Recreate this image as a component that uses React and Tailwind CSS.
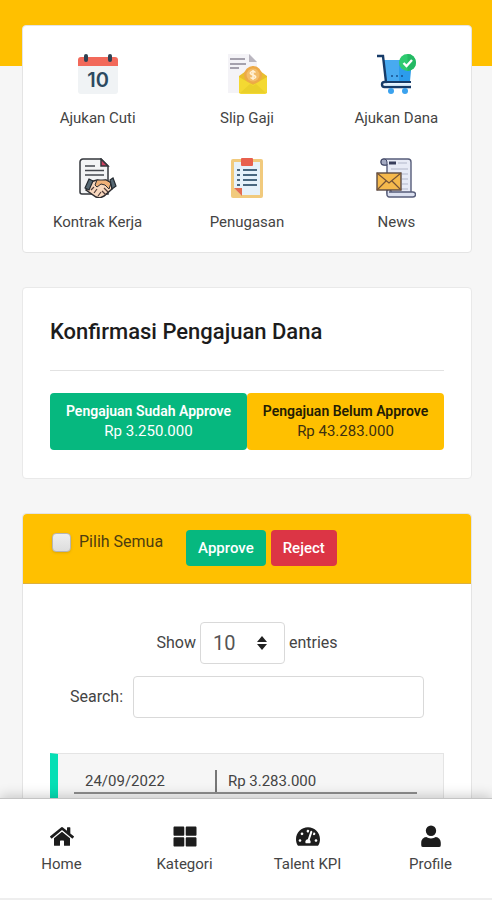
import React, { useState } from 'react';
import { FaHome, FaThLarge, FaTachometerAlt } from 'react-icons/fa';

const CalendarIcon = () => (
  <svg viewBox="0 0 40 40" className="w-10 h-10" aria-hidden="true">
    <path d="M0 10h40v27a3 3 0 0 1-3 3H3a3 3 0 0 1-3-3z" fill="#f0f3f5" />
    <path d="M3 3h34a3 3 0 0 1 3 3v6H0V6a3 3 0 0 1 3-3z" fill="#f2695a" />
    <rect x="6" y="0" width="4" height="8" rx="2" fill="#2f4152" />
    <rect x="30" y="0" width="4" height="8" rx="2" fill="#2f4152" />
    <text
      x="20"
      y="33"
      textAnchor="middle"
      fontFamily="Inter, sans-serif"
      fontWeight="600"
      fontSize="20"
      fill="#2c4a60"
    >
      10
    </text>
  </svg>
);

const PayslipIcon = () => (
  <svg viewBox="0 0 40 40" className="w-10 h-10" aria-hidden="true">
    <path d="M1 0h22l7 8v31H1z" fill="#f4f3f7" />
    <path d="M22 0l8 8h-8z" fill="#b9b6bf" />
    <g stroke="#837d8d" strokeWidth="1.4">
      <path d="M3 5h15" />
      <path d="M3 10h16" />
      <path d="M3 14h9" />
    </g>
    <path d="M12 22l14-10 14 10v17H12z" fill="#e9bf2d" />
    <circle cx="26" cy="21" r="9" fill="#edaa48" />
    <circle cx="26" cy="21" r="6.5" fill="#f3bd69" />
    <path
      d="M28.5 18.5q-2.5-2-4.5-.5t2 3 2 3-4.5-.5M26 16v10"
      fill="none"
      stroke="#fff1d5"
      strokeWidth="1.5"
    />
    <path d="M12 23l14 8 14-8v15a2 2 0 0 1-2 2H14a2 2 0 0 1-2-2z" fill="#f4d932" />
    <path d="M13 39l10-9 3 2 3-2 10 9z" fill="#ead02b" />
  </svg>
);

const CartIcon = () => (
  <svg viewBox="0 0 40 40" className="w-10 h-10" aria-hidden="true">
    <path d="M8 6h28l-2 21H10z" fill="#2c9cec" />
    <path d="M8 6h15v21H10z" fill="#48aaf0" />
    <path
      d="M1 2h6l3 26H8.5a2.5 2.5 0 0 0 0 5H35"
      fill="none"
      stroke="#163b68"
      strokeWidth="2.4"
    />
    <path d="M9 28h26" stroke="#163b68" strokeWidth="2" />
    <path d="M9 30.5h25" stroke="#d8efff" strokeWidth="2" />
    <g fill="#174f8c">
      <circle cx="16" cy="22" r="1" />
      <circle cx="21" cy="22" r="1" />
      <circle cx="26" cy="22" r="1" />
    </g>
    <circle cx="15" cy="37" r="3" fill="#3ba2ee" />
    <circle cx="29" cy="37" r="3" fill="#3ba2ee" />
    <circle cx="31.5" cy="8.5" r="8.5" fill="#2ecb70" />
    <path d="M31.5 0a8.5 8.5 0 0 1 0 17z" fill="#24b963" />
    <path d="M27.5 9l3 3 5.5-6" fill="none" stroke="#fff" strokeWidth="2.4" />
  </svg>
);

const ContractIcon = () => (
  <svg viewBox="0 0 40 40" className="w-10 h-10" aria-hidden="true">
    <path
      d="M5 1h18l7 7v28H4a2 2 0 0 1-2-2V4a3 3 0 0 1 3-3z"
      fill="#f3f4f5"
      stroke="#34373c"
      strokeWidth="1.5"
    />
    <path d="M23 1v7h7z" fill="#cf4160" stroke="#34373c" strokeWidth="1.5" />
    <g stroke="#45484e" strokeWidth="1.5">
      <path d="M7 8h10" />
      <path d="M7 12.5h19" />
      <path d="M7 17h19" />
    </g>
    <path
      d="M12 24l7-2 4 1 5-1 5 3 1 6-8 7-4 2-4-1-10-7z"
      fill="#f8d7bd"
      stroke="#2d2c30"
      strokeWidth="1.5"
    />
    <path d="M19 22l9 0 5 3-2 6-4-4-4-1-4 3-2-2z" fill="#efb078" stroke="#2d2c30" />
    <path
      d="M13 32l3-3M16 35l3-4M20 38l3-4M24 33l4 4M26 30l4 4"
      stroke="#4f3b38"
      strokeWidth="1.2"
    />
    <path d="M11 21l4 2-4 9-4-2z" fill="#566873" stroke="#242a30" strokeWidth="1.2" />
    <path d="M32 22l3-2 3 8-4 3z" fill="#566873" stroke="#242a30" strokeWidth="1.2" />
  </svg>
);

const ClipboardIcon = () => (
  <svg viewBox="0 0 40 40" className="w-10 h-10" aria-hidden="true">
    <rect x="4" y="1" width="32" height="39" rx="2" fill="#f1ca7d" />
    <path d="M7 4h26v33H14l-7-7z" fill="#e6f1fa" />
    <path d="M7 30h8v8z" fill="#e36b50" />
    <rect x="14" y="0" width="12" height="8" rx="1" fill="#e8604e" />
    <g stroke="#49677f" strokeWidth="2">
      <path d="M16 12h14M16 17h14M16 22h14M16 27h14" />
      <path d="M10 12h3M10 17h3M10 22h3M10 27h3" />
    </g>
  </svg>
);

const NewsIcon = () => (
  <svg viewBox="0 0 40 40" className="w-10 h-10" aria-hidden="true">
    <path
      d="M8 1h24a3 3 0 0 1 3 3v31H11V7H8a3 3 0 0 1 0-6z"
      fill="#e8ebf6"
      stroke="#565c79"
      strokeWidth="1.4"
    />
    <path d="M8 1a3 3 0 0 1 3 3v3H8a3 3 0 0 1 0-6z" fill="#a4aac2" stroke="#454b69" />
    <path d="M13 5h7" stroke="#383e5c" strokeWidth="3" />
    <path d="M22 5h9M15 11h17M26 16h6M26 21h6M26 26h6M15 31h17" stroke="#b2b8ca" strokeWidth="1.2" />
    <path
      d="M13 34h24a2.5 2.5 0 0 1 0 5H13a2.5 2.5 0 0 1-2-3v-3a2 2 0 0 1 4 1z"
      fill="#dce1f0"
      stroke="#565c79"
      strokeWidth="1.4"
    />
    <rect x="1" y="15" width="24" height="17" fill="#f6b94c" stroke="#5c4b45" strokeWidth="1.4" />
    <path d="M1 15l12 10 12-10M1 32l9-9M25 32l-9-9" fill="none" stroke="#765336" strokeWidth="1.2" />
  </svg>
);

const ProfileIcon = ({ className }) => (
  <svg viewBox="0 0 24 24" className={className} fill="currentColor" aria-hidden="true">
    <circle cx="12" cy="6" r="5.4" />
    <path d="M7 12.6c1.4 1 3 1.4 5 1.4s3.6-.4 5-1.4c3 .3 5.2 2.8 5.2 6v2.4a2 2 0 0 1-2 2H3.8a2 2 0 0 1-2-2v-2.4c0-3.2 2.200-5.7 5.2-6z" />
  </svg>
);

const menus = [
  { label: 'Ajukan Cuti', icon: CalendarIcon },
  { label: 'Slip Gaji', icon: PayslipIcon },
  { label: 'Ajukan Dana', icon: CartIcon },
  { label: 'Kontrak Kerja', icon: ContractIcon },
  { label: 'Penugasan', icon: ClipboardIcon },
  { label: 'News', icon: NewsIcon }
];

const navItems = [
  { label: 'Home', icon: FaHome },
  { label: 'Kategori', icon: FaThLarge },
  { label: 'Talent KPI', icon: FaTachometerAlt },
  { label: 'Profile', icon: ProfileIcon }
];

const App = () => {
  const [selectAll, setSelectAll] = useState(false);
  const [entries, setEntries] = useState('10');
  const [search, setSearch] = useState('');

  return (
    <div className="flex h-screen flex-col bg-[#f6f6f6] font-['Roboto',sans-serif] text-base text-[#444]">
      <main className="min-h-0 flex-1 overflow-y-auto [scrollbar-width:none]">
        <div className="h-[66px] bg-[#ffc000]" />

        <div className="-mt-[41px] flex flex-col gap-[34px] pr-5 pb-6 pl-[22px]">
          {/* Menu */}
          <section className="grid grid-cols-3 gap-y-7 rounded border border-[#e4e4e4] bg-white pt-7 pb-[18px]">
            {menus.map(({ label, icon: Icon }) => (
              <a key={label} href="#" className="flex flex-col items-center gap-3">
                <Icon />
                <span className="text-[15px] leading-6">{label}</span>
              </a>
            ))}
          </section>

          {/* Summary */}
          <section className="rounded border border-[#e9e9e9] bg-white px-[27px] py-7">
            <h1 className="text-[22px] leading-8 font-medium text-[#1c1c1c]">Konfirmasi Pengajuan Dana</h1>
            <hr className="mt-[22px] mb-[22px] border-[#e2e2e2]" />
            <div className="grid grid-cols-2 text-center">
              <button className="rounded bg-[#06b87f] py-2 text-white">
                <span className="block text-sm leading-5 font-semibold">Pengajuan Sudah Approve</span>
                <span className="block text-[15px] leading-[21px]">Rp 3.250.000</span>
              </button>
              <button className="rounded bg-[#ffc000] py-2 text-[#3d3010]">
                <span className="block text-sm leading-5 font-semibold text-[#241c05]">Pengajuan Belum Approve</span>
                <span className="block text-[15px] leading-[21px]">Rp 43.283.000</span>
              </button>
            </div>
          </section>

          {/* Request list */}
          <section className="rounded border border-[#e4e4e4] bg-white">
            <div className="flex items-start rounded-t border-b border-[#dcb040] bg-[#ffc000] px-[27px] pt-4 pb-[17px]">
              <label className="mr-[23px] flex items-center gap-2 text-[#4d3d10]">
                <input
                  type="checkbox"
                  checked={selectAll}
                  onChange={(e) => setSelectAll(e.target.checked)}
                  className="ml-0.5 h-[19px] w-[19px] appearance-none rounded-sm border border-[#b5b5b5] bg-linear-to-b from-[#eeeeee] to-[#dddddd] shadow-sm checked:from-blue-500 checked:to-blue-600"
                />
                Pilih Semua
              </label>
              <button className="rounded bg-[#06b87f] px-3 py-2 text-[15px] leading-5 font-medium text-white">
                Approve
              </button>
              <button className="ml-[5px] rounded bg-[#dc3545] px-3 py-2 text-[15px] leading-5 font-medium text-white">
                Reject
              </button>
            </div>

            <div className="px-[27px] pt-[38px] pb-6">
              <div className="flex items-center justify-center gap-1">
                <label htmlFor="entries">Show</label>
                <div className="relative">
                  <select
                    id="entries"
                    value={entries}
                    onChange={(e) => setEntries(e.target.value)}
                    className="h-[42px] w-[85px] appearance-none rounded border border-[#d9d9d9] bg-white px-3 text-xl text-[#555]"
                  >
                    <option value="10">10</option>
                    <option value="25">25</option>
                    <option value="50">50</option>
                    <option value="100">100</option>
                  </select>
                  <svg
                    viewBox="0 0 10 14"
                    className="pointer-events-none absolute top-3.5 right-[18px] h-3.5 w-2.5"
                    aria-hidden="true"
                  >
                    <path d="M5 0l5 6H0zM5 14l5-6H0z" fill="#222" />
                  </svg>
                </div>
                <span>entries</span>
              </div>

              <div className="mt-3 flex items-center justify-center gap-2.5 px-5">
                <label htmlFor="search">Search:</label>
                <input
                  id="search"
                  type="search"
                  value={search}
                  onChange={(e) => setSearch(e.target.value)}
                  className="h-[42px] min-w-0 flex-1 rounded border border-[#d9d9d9] bg-white px-3 text-xl"
                />
              </div>

              <div className="mt-[35px] border border-l-8 border-[#e4e4e4] border-l-[#06dfb5] bg-[#f6f6f6] pt-4 pr-[26px] pb-6 pl-4">
                <div className="grid grid-cols-[5fr_7fr] border-b-2 border-[#8e8e8e] text-[15px] leading-[22px]">
                  <span className="border-r-2 border-[#777] pl-[11px]">24/09/2022</span>
                  <span className="pl-[11px]">Rp 3.283.000</span>
                </div>
              </div>
            </div>
          </section>
        </div>
      </main>

      {/* Bottom navigation */}
      <nav className="relative grid grid-cols-4 border-t border-b-2 border-t-[#c4c4c4] border-b-[#eeeeee] bg-white pt-[26px] pb-[22px] shadow-[0_-2px_12px_rgba(0,0,0,0.2)]">
        {navItems.map(({ label, icon: Icon }) => (
          <a key={label} href="#" className="flex flex-col items-center gap-1">
            <Icon className="h-[23px] w-6 text-[#1c1c1c]" />
            <span className="text-[15px] leading-6">{label}</span>
          </a>
        ))}
      </nav>
    </div>
  );
};

export default App;
